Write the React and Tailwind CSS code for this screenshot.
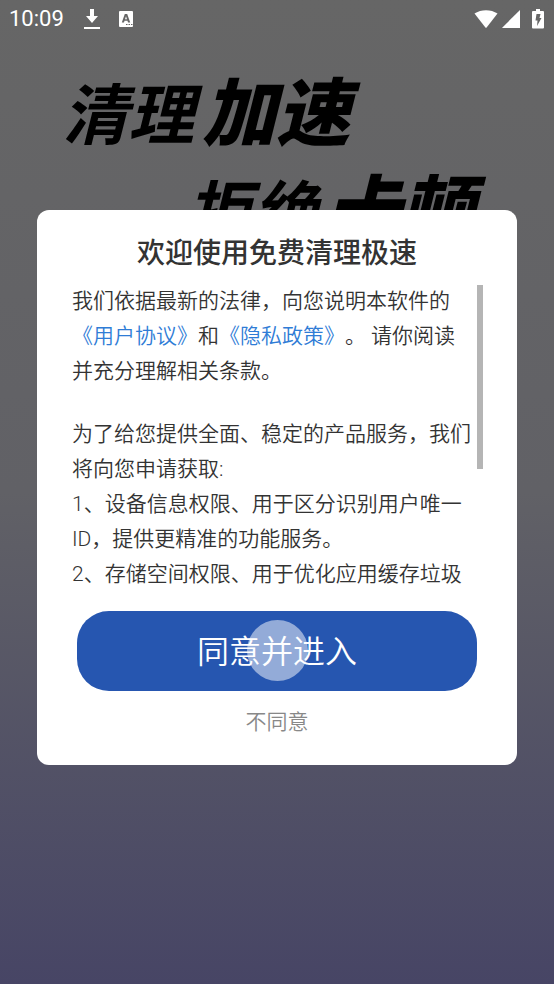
import { useState } from 'react'

function StatusBar() {
  return (
    <header className="flex h-[38px] items-center justify-between pl-[9px] pr-[10px] text-white">
      <div className="flex items-center">
        <time className="w-[55px] text-[22px] leading-6">10:09</time>
        <svg className="ml-5 h-5 w-4" viewBox="0 0 16 20" fill="currentColor" aria-hidden="true">
          <path d="M6 0h4v7h4l-6 7-6-7h4z" />
          <path d="M0 18h16v2H0z" />
        </svg>
        <svg className="ml-[18px] h-4 w-4" viewBox="0 0 16 16" aria-hidden="true">
          <rect x="1" width="14" height="16" rx="1" fill="currentColor" />
          <path d="M6.800 3h2.400l3 8.500h-2.200l-.5-1.700h-3L6 11.500H3.800zM8 5.200L7 8.200h2z" fill="#666" fillRule="evenodd" />
          <path d="M8 13.500h1.500M10.500 13.500h1.500M13 13.500h1.500" stroke="#666" />
        </svg>
      </div>
      <div className="flex items-center">
        <svg className="h-5 w-6" viewBox="0 0 24 20" fill="currentColor" aria-hidden="true">
          <path d="M.5 4.500C7 0 17 0 23.500 4.500L12.600 18.500q-.6.700-1.200 0z" />
        </svg>
        <svg className="ml-1 h-5 w-[18px]" viewBox="0 0 18 20" fill="currentColor" aria-hidden="true">
          <path d="M18 1v18H.6Q0 19 .4 18.400z" />
        </svg>
        <svg className="ml-3 h-5 w-3" viewBox="0 0 12 20" aria-hidden="true">
          <path d="M4 0h4v2h3q1 0 1 1v15.500q0 1-1 1H1q-1 0-1-1V3q0-1 1-1h3z" fill="currentColor" />
          <path d="M4.500 5h4L7.500 9H9.500L5 17l.5-5.500H3.500z" fill="#666" />
        </svg>
      </div>
    </header>
  )
}

function Headline() {
  return (
    <h1 className="flex flex-col pl-[62px] whitespace-nowrap text-black italic">
      <span className="flex h-[97px] items-end gap-2">
        <span className="text-[66px] leading-[76px] font-bold">清理</span>
        <span className="text-[74px] leading-[80px] font-black">加速</span>
      </span>
      <span className="flex h-[97px] items-end gap-2 pl-[124px]">
        <span className="text-[66px] leading-[76px] font-bold">拒绝</span>
        <span className="text-[74px] leading-[80px] font-black">卡顿</span>
      </span>
    </h1>
  )
}

function ConsentDialog({ onClose }) {
  return (
    <div className="fixed inset-0 flex items-center justify-center px-[37px] pb-[10px]">
      <section
        role="dialog"
        aria-modal="true"
        aria-labelledby="consent-title"
        className="flex w-full max-w-[480px] flex-col rounded-xl bg-white px-[34px] pt-[22px] pb-6 text-[#333]"
      >
        <h2 id="consent-title" className="text-center text-[28px] leading-[44px] font-medium">
          欢迎使用免费清理极速
        </h2>

        <div className="relative mt-2">
          <div className="max-h-[308px] overflow-x-hidden overflow-y-auto pl-px text-[21px] leading-[35px] font-[350] whitespace-nowrap [scrollbar-width:none]">
            <p>
              我们依据最新的法律，向您说明本软件的
              <br />
              <a href="#terms" className="text-[#2f7cd6]">《用户协议》</a>和<a href="#privacy" className="text-[#2f7cd6]">《隐私政策》</a>。 请你阅读
              <br />
              并充分理解相关条款。
            </p>
            <p className="mt-7">
              为了给您提供全面、稳定的产品服务，我们
              <br />
              将向您申请获取:
            </p>
            <p>
              1、设备信息权限、用于区分识别用户唯一
              <br />
              ID，提供更精准的功能服务。
            </p>
            <p>2、存储空间权限、用于优化应用缓存垃圾</p>
          </div>
          <div className="absolute top-px right-0 h-[184px] w-[6px] bg-[#b5b5b5]" />
        </div>

        <button
          type="button"
          onClick={onClose}
          className="relative mx-[6px] mt-[19px] h-20 rounded-[32px] bg-[#2656b0] pt-[3px] text-[32px] font-[350] text-white"
        >
          同意并进入
          <span className="absolute inset-0 m-auto h-[61px] w-[61px] rounded-full bg-white/50" />
        </button>
        <button type="button" onClick={onClose} className="mt-[14px] h-9 self-center text-[21px] font-[350] text-[#888]">
          不同意
        </button>
      </section>
    </div>
  )
}

export default function App() {
  const [open, setOpen] = useState(true)

  return (
    <main className="min-h-screen bg-linear-to-b from-[#666666] via-[#616166] to-[#474565] font-['Roboto','Noto_Sans_CJK_SC',sans-serif] [text-spacing-trim:space-all]">
      <StatusBar />
      <div className="pt-5">
        <Headline />
      </div>
      {open && <ConsentDialog onClose={() => setOpen(false)} />}
    </main>
  )
}
